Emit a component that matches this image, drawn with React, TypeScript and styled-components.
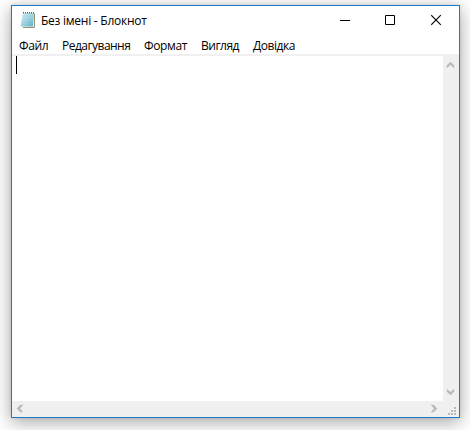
import React from 'react';
import styled, { createGlobalStyle } from 'styled-components';

const GlobalStyle = createGlobalStyle`
  html, body { margin: 0; padding: 0; background: #fff; overflow: hidden; }
  * { box-sizing: border-box; }
`;

const Desktop = styled.div`
  width: 470px;
  height: 430px;
  padding: 5px 10px 12px 11px;
  overflow: hidden;
  background: #fff;
`;

const Window = styled.div`
  width: 449px;
  height: 413px;
  display: flex;
  flex-direction: column;
  border: 1px solid #1c7acb;
  background: #fff;
  box-shadow: 0 4px 17px rgba(0, 0, 0, 0.36), 0 0 3px rgba(0, 0, 0, 0.1);
  font-family: 'Open Sans', 'Noto Sans', sans-serif;
  font-size: 12px;
  color: #000;
`;

const TitleBar = styled.div`
  display: flex;
  height: 30px;
  padding-left: 8px;
  flex: none;
`;

const Title = styled.div<{ $spacing: number }>`
  flex: 1;
  padding-left: 4px;
  line-height: 29px;
  white-space: nowrap;
  letter-spacing: ${(p) => p.$spacing}px;
`;

const TitleIcon = styled.svg`
  flex: none;
  margin-top: 6px;
`;

const Controls = styled.div`
  display: flex;
  flex: none;
`;

const ControlButton = styled.button<{ $width: number }>`
  width: ${(p) => p.$width}px;
  height: 28px;
  padding: 0;
  border: 0;
  background: transparent;
  display: flex;
  align-items: center;
  justify-content: flex-start;
`;

const MenuBar = styled.div`
  display: flex;
  height: 18px;
  flex: none;
  padding-left: 7px;
`;

const MenuItem = styled.div<{ $width: number; $spacing: number }>`
  width: ${(p) => p.$width}px;
  line-height: 19px;
  white-space: nowrap;
  letter-spacing: ${(p) => p.$spacing}px;
`;

const Editor = styled.div`
  flex: 1;
  display: grid;
  grid-template-columns: 1fr 16px;
  grid-template-rows: 1fr 16px;
  border-top: 2px solid #f0f0f0;
`;

const TextArea = styled.div`
  padding: 0 4px;
`;

const Caret = styled.div`
  width: 1px;
  height: 18px;
  background: #000;
`;

const VerticalBar = styled.div`
  display: flex;
  flex-direction: column;
  justify-content: space-between;
  background: #f0f0f0;
`;

const HorizontalBar = styled.div`
  display: flex;
  justify-content: space-between;
  background: #f0f0f0;
`;

const Corner = styled.div`
  background: #f0f0f0;
`;

const Glyph = styled.svg`
  display: block;
  flex: none;
`;

const menus = [
  { label: 'Файл', width: 43, spacing: -0.35 },
  { label: 'Редагування', width: 82, spacing: -0.53 },
  { label: 'Формат', width: 57, spacing: -0.35 },
  { label: 'Вигляд', width: 52, spacing: -0.5 },
  { label: 'Довідка', width: 60, spacing: -0.45 },
];

function NotepadIcon() {
  return (
    <TitleIcon width="17" height="18" viewBox="0 0 17 18">
      <defs>
        <linearGradient id="paper" x1="0" y1="0" x2="1" y2="1">
          <stop offset="0" stopColor="#d3eff4" />
          <stop offset="0.5" stopColor="#a3d8e3" />
          <stop offset="1" stopColor="#55abc0" />
        </linearGradient>
      </defs>
      <path d="M4 1h11v14.5H3z" fill="#f1eee1" />
      <path d="M14.5 1.5v14H3" fill="none" stroke="#9a9278" />
      <path d="M3 1h11l-1.2 13.5H.5z" fill="url(#paper)" />
      <path d="M3 4h10M2.6 7h10M2 10h10M1.5 13h10" stroke="#84c0ce" strokeWidth="0.4" />
      <path d="M3.5 0v1.5M5.5 0v1.5M7.5 0v1.5M9.5 0v1.5M11.5 0v1.5M13.5 0v1.5" stroke="#4b6871" />
    </TitleIcon>
  );
}

function Arrow({ turn, dx = 0, dy = 0 }: { turn: number; dx?: number; dy?: number }) {
  return (
    <Glyph width="16" height="16" viewBox="0 0 16 16">
      <path
        d="M7.5 5.7L11.2 9.3v3L7.5 9.1 3.8 12.3v-3z"
        fill="#bababa"
        transform={`translate(${dx} ${dy}) rotate(${turn} 8 8)`}
      />
    </Glyph>
  );
}

export default function App() {
  return (
    <>
      <GlobalStyle />
      <Desktop>
        <Window>
          <TitleBar>
            <NotepadIcon />
            <Title $spacing={-0.25}>Без імені - Блокнот</Title>
            <Controls>
              <ControlButton $width={45} aria-label="Згорнути">
                <Glyph width="12" height="12"><path d="M0 6.5h10" stroke="#000" /></Glyph>
              </ControlButton>
              <ControlButton $width={46} aria-label="Розгорнути">
                <Glyph width="12" height="12"><path d="M.5 1.5h9v9h-9z" fill="none" stroke="#000" /></Glyph>
              </ControlButton>
              <ControlButton $width={28} aria-label="Закрити">
                <Glyph width="12" height="12"><path d="M.2 1.2l9.6 9.6M9.8 1.2L.2 10.8" stroke="#000" strokeWidth="1.1" /></Glyph>
              </ControlButton>
            </Controls>
          </TitleBar>
          <MenuBar>
            {menus.map((m) => (
              <MenuItem key={m.label} $width={m.width} $spacing={m.spacing}>{m.label}</MenuItem>
            ))}
          </MenuBar>
          <Editor>
            <TextArea><Caret /></TextArea>
            <VerticalBar>
              <Arrow turn={0} />
              <Arrow turn={180} dx={-1} />
            </VerticalBar>
            <HorizontalBar>
              <Arrow turn={-90} dx={-1} dy={-1} />
              <Arrow turn={90} />
            </HorizontalBar>
            <Corner>
              <Glyph width="16" height="16" shapeRendering="crispEdges">
                <path d="M11 6h2v2h-2zM8 9h2v2h-2zM11 9h2v2h-2zM5 12h2v2h-2zM8 12h2v2h-2zM11 12h2v2h-2z" fill="#bababa" />
              </Glyph>
            </Corner>
          </Editor>
        </Window>
      </Desktop>
    </>
  );
}
